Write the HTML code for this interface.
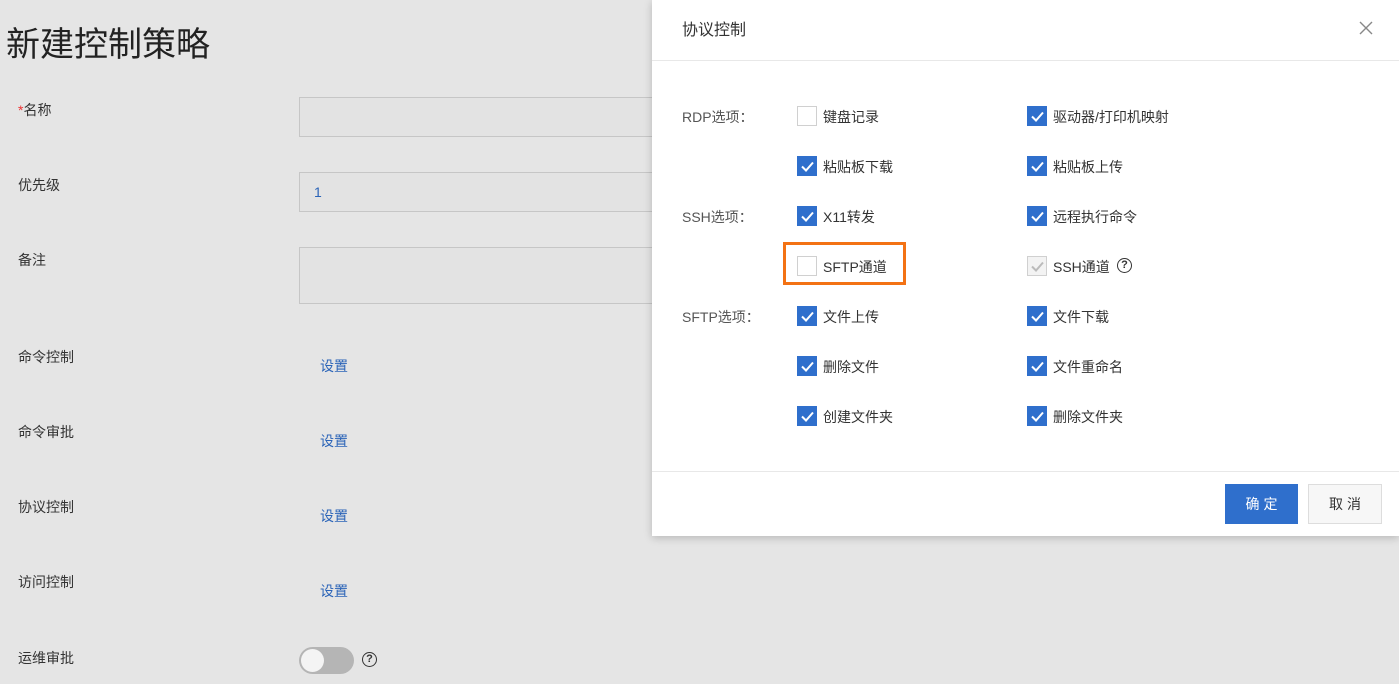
<!DOCTYPE html>
<html><head><meta charset="utf-8"><style>
*{margin:0;padding:0;box-sizing:border-box}
body{width:1399px;height:684px;background:#e5e5e5;font-family:"Liberation Sans","Noto Sans CJK SC",sans-serif;position:relative;overflow:hidden;color:#333}
.a{position:absolute;white-space:nowrap}
.lbl{font-size:14px;color:#333}
.inp{position:absolute;left:299px;width:400px;border:1px solid #c6c6c6;background:#e3e3e3}
.link{font-size:14px;color:#2b64b8}
.modal{position:absolute;left:652px;top:0;width:747px;height:536px;background:#fff;box-shadow:0 2px 8px rgba(0,0,0,.2)}
.cb{position:absolute;width:20px;height:20px;border:1px solid #d0d0d0;background:#fff}
.cb.on{background:#2f6fcc;border-color:#2f6fcc}
.cb svg{position:absolute;left:3px;top:4px}
.t{position:absolute;font-size:14px;color:#333;white-space:nowrap}
.g{color:#555}
</style></head><body>
<div class="a" style="left:6px;top:17px;font-size:34px;color:#222">新建控制策略</div>
<div class="a lbl" style="left:18px;top:100px"><span style="color:#e33">*</span>名称</div>
<div class="inp" style="top:97px;height:40px"></div>
<div class="a lbl" style="left:18px;top:175px">优先级</div>
<div class="inp" style="top:172px;height:40px"></div>
<div class="a" style="left:314px;top:184px;font-size:14px;color:#2b64b8">1</div>
<div class="a lbl" style="left:18px;top:250px">备注</div>
<div class="inp" style="top:247px;height:57px"></div>
<div class="a lbl" style="left:18px;top:347px">命令控制</div><div class="a link" style="left:320px;top:356px">设置</div>
<div class="a lbl" style="left:18px;top:422px">命令审批</div><div class="a link" style="left:320px;top:431px">设置</div>
<div class="a lbl" style="left:18px;top:497px">协议控制</div><div class="a link" style="left:320px;top:506px">设置</div>
<div class="a lbl" style="left:18px;top:572px">访问控制</div><div class="a link" style="left:320px;top:581px">设置</div>
<div class="a lbl" style="left:18px;top:648px">运维审批</div>
<div class="a" style="left:299px;top:647px;width:55px;height:27px;border-radius:14px;background:#b5b5b5"><div style="position:absolute;left:2px;top:2px;width:23px;height:23px;border-radius:50%;background:#f4f4f4"></div></div>
<div class="a" style="left:362px;top:652px;width:15px;height:15px;border:1.5px solid #333;border-radius:50%;font-size:11px;line-height:12px;text-align:center;font-weight:bold">?</div>

<div class="modal">
<div class="t" style="left:30px;top:16px;font-size:16px">协议控制</div>
<svg style="position:absolute;left:707px;top:21px" width="14" height="14"><path d="M1 1L13 13M13 1L1 13" stroke="#888" stroke-width="1.4"/></svg>
<div style="position:absolute;left:0;top:60px;width:747px;height:1px;background:#e8e8e8"></div>
<div class="t g" style="left:30px;top:107px">RDP选项：</div>
<div class="t g" style="left:30px;top:207px">SSH选项：</div>
<div class="t g" style="left:30px;top:307px">SFTP选项：</div>

<div class="cb" style="left:145px;top:106px"></div><div class="t" style="left:171px;top:107px">键盘记录</div>
<div class="cb on" style="left:375px;top:106px"><svg width="13" height="11"><path d="M1 5.5l4 4 7-8" stroke="#fff" stroke-width="2" fill="none"/></svg></div><div class="t" style="left:401px;top:107px">驱动器/打印机映射</div>
<div class="cb on" style="left:145px;top:156px"><svg width="13" height="11"><path d="M1 5.5l4 4 7-8" stroke="#fff" stroke-width="2" fill="none"/></svg></div><div class="t" style="left:171px;top:157px">粘贴板下载</div>
<div class="cb on" style="left:375px;top:156px"><svg width="13" height="11"><path d="M1 5.5l4 4 7-8" stroke="#fff" stroke-width="2" fill="none"/></svg></div><div class="t" style="left:401px;top:157px">粘贴板上传</div>
<div class="cb on" style="left:145px;top:206px"><svg width="13" height="11"><path d="M1 5.5l4 4 7-8" stroke="#fff" stroke-width="2" fill="none"/></svg></div><div class="t" style="left:171px;top:207px">X11转发</div>
<div class="cb on" style="left:375px;top:206px"><svg width="13" height="11"><path d="M1 5.5l4 4 7-8" stroke="#fff" stroke-width="2" fill="none"/></svg></div><div class="t" style="left:401px;top:207px">远程执行命令</div>
<div style="position:absolute;left:131px;top:242px;width:123px;height:43px;border:3px solid #f37214"></div>
<div class="cb" style="left:145px;top:256px"></div><div class="t" style="left:171px;top:257px">SFTP通道</div>
<div class="cb" style="left:375px;top:256px;background:#f3f3f3"><svg width="13" height="11"><path d="M1 5.5l4 4 7-8" stroke="#bbb" stroke-width="2" fill="none"/></svg></div><div class="t" style="left:401px;top:257px">SSH通道</div>
<div style="position:absolute;left:465px;top:258px;width:15px;height:15px;border:1.5px solid #333;border-radius:50%;font-size:11px;line-height:12px;text-align:center;font-weight:bold">?</div>
<div class="cb on" style="left:145px;top:306px"><svg width="13" height="11"><path d="M1 5.5l4 4 7-8" stroke="#fff" stroke-width="2" fill="none"/></svg></div><div class="t" style="left:171px;top:307px">文件上传</div>
<div class="cb on" style="left:375px;top:306px"><svg width="13" height="11"><path d="M1 5.5l4 4 7-8" stroke="#fff" stroke-width="2" fill="none"/></svg></div><div class="t" style="left:401px;top:307px">文件下载</div>
<div class="cb on" style="left:145px;top:356px"><svg width="13" height="11"><path d="M1 5.5l4 4 7-8" stroke="#fff" stroke-width="2" fill="none"/></svg></div><div class="t" style="left:171px;top:357px">删除文件</div>
<div class="cb on" style="left:375px;top:356px"><svg width="13" height="11"><path d="M1 5.5l4 4 7-8" stroke="#fff" stroke-width="2" fill="none"/></svg></div><div class="t" style="left:401px;top:357px">文件重命名</div>
<div class="cb on" style="left:145px;top:406px"><svg width="13" height="11"><path d="M1 5.5l4 4 7-8" stroke="#fff" stroke-width="2" fill="none"/></svg></div><div class="t" style="left:171px;top:407px">创建文件夹</div>
<div class="cb on" style="left:375px;top:406px"><svg width="13" height="11"><path d="M1 5.5l4 4 7-8" stroke="#fff" stroke-width="2" fill="none"/></svg></div><div class="t" style="left:401px;top:407px">删除文件夹</div>

<div style="position:absolute;left:0;top:471px;width:747px;height:1px;background:#e8e8e8"></div>
<div style="position:absolute;left:573px;top:484px;width:73px;height:40px;background:#2f6fcc;color:#fff;font-size:14px;line-height:40px;text-align:center;letter-spacing:4px;padding-left:4px">确定</div>
<div style="position:absolute;left:656px;top:484px;width:74px;height:40px;background:#f7f7f7;border:1px solid #ddd;color:#333;font-size:14px;line-height:38px;text-align:center;letter-spacing:4px;padding-left:4px">取消</div>
</div>
</body></html>
